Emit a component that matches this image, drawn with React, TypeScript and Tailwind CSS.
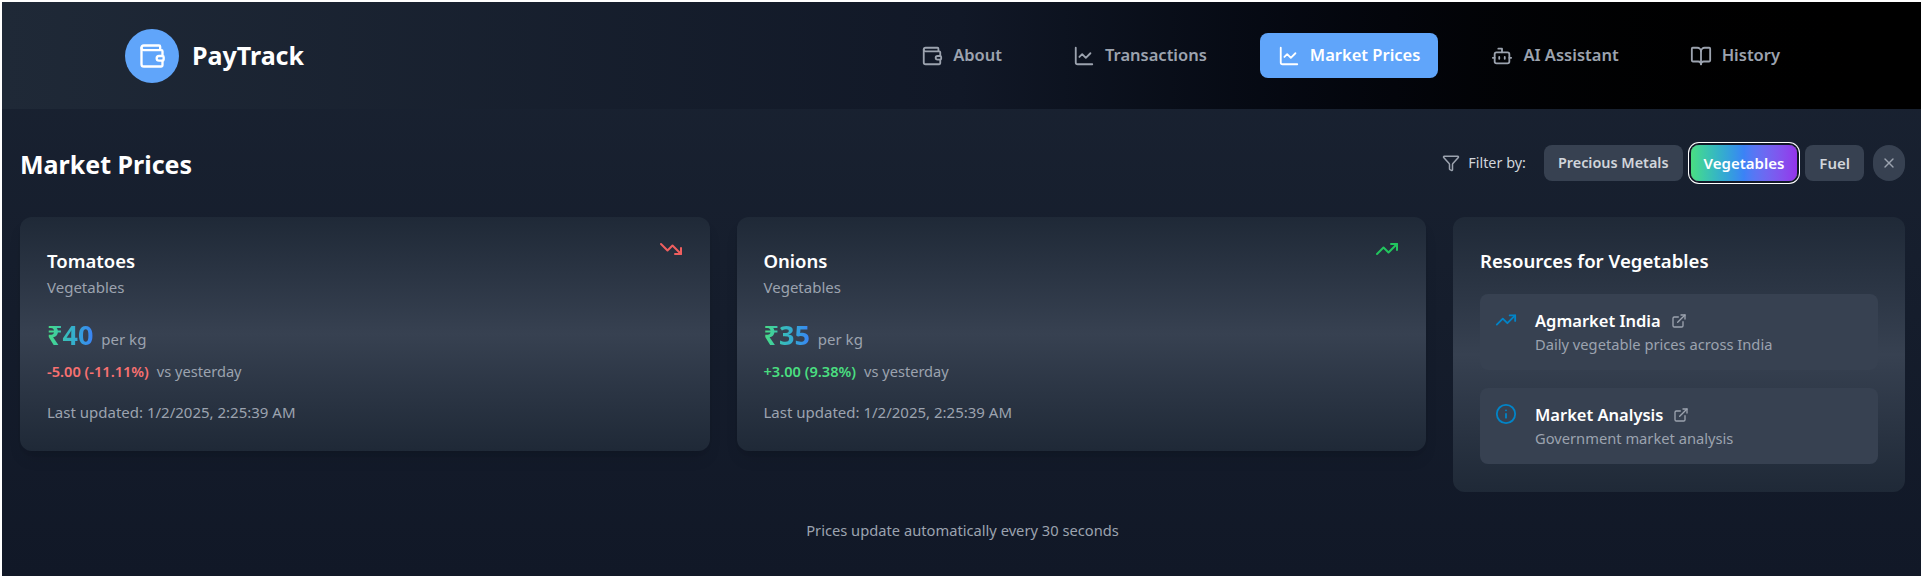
import {
  BookOpen,
  Bot,
  ExternalLink,
  Filter,
  Info,
  LineChart,
  TrendingDown,
  TrendingUp,
  Wallet,
  X,
} from "lucide-react";

const priceText =
  "bg-gradient-to-r from-[#4ade80] to-[#3b82f6] bg-clip-text text-[27px] leading-[36px] font-bold text-transparent";

function NavItem({ icon, label, active }: { icon: React.ReactNode; label: string; active?: boolean }) {
  return (
    <div
      className={
        active
          ? "flex h-[45px] items-center gap-[10px] rounded-lg bg-[#60a5fa] px-[18px] text-white"
          : "flex h-[45px] items-center gap-[10px] rounded-lg px-[18px] text-[#9ca3af]"
      }
    >
      {icon}
      <span className="text-[16.5px] font-semibold">{label}</span>
    </div>
  );
}

function PriceCard({
  name,
  price,
  change,
  up,
}: {
  name: string;
  price: string;
  change: string;
  up?: boolean;
}) {
  return (
    <div className="relative h-[234px] flex-1 rounded-xl bg-gradient-to-b from-[#1f2937] via-[#374151] to-[#1f2937] px-[27px] pt-[30px] shadow-lg">
      {up ? (
        <TrendingUp className="absolute top-[20px] right-[27px] h-6 w-6 text-[#22c55e]" />
      ) : (
        <TrendingDown className="absolute top-[20px] right-[27px] h-6 w-6 text-[#ef5f5f]" />
      )}
      <h3 className="text-[18.5px] leading-[28px] font-semibold text-white">{name}</h3>
      <p className="mt-[2px] text-[15px] leading-[20px] text-[#9ca3af]">Vegetables</p>
      <div className="mt-[20px] flex items-baseline gap-2">
        <span className={priceText}>{price}</span>
        <span className="text-[15px] text-[#9ca3af]">per kg</span>
      </div>
      <div className="mt-[8px] flex items-center gap-2 text-[14.6px] leading-[20px]">
        <span className={up ? "font-semibold text-[#4ade80]" : "font-semibold text-[#f87171]"}>{change}</span>
        <span className="text-[#9ca3af]">vs yesterday</span>
      </div>
      <p className="mt-[21px] text-[15px] leading-[20px] text-[#9ca3af]">Last updated: 1/2/2025, 2:25:39 AM</p>
    </div>
  );
}

function ResourceRow({ icon, title, text }: { icon: React.ReactNode; title: string; text: string }) {
  return (
    <div className="flex h-[76px] gap-[18px] rounded-lg bg-[#374151] px-[15px] py-[15px]">
      <div className="w-[22px] shrink-0 text-[#0284c7]">{icon}</div>
      <div>
        <div className="flex items-center gap-[10px]">
          <span className="text-[16.5px] leading-[24px] font-semibold text-white">{title}</span>
          <ExternalLink className="h-4 w-4 text-[#9ca3af]" />
        </div>
        <p className="mt-[1px] text-[14.7px] leading-[20px] text-[#9ca3af]">{text}</p>
      </div>
    </div>
  );
}

export default function App() {
  return (
    <div className="flex h-[578px] flex-col border-2 border-white bg-gradient-to-b from-[#1a2332] to-[#111827] font-['Noto_Sans',sans-serif]">
      <header className="flex h-[107px] shrink-0 items-center justify-between bg-gradient-to-r from-[#1f2937] via-[#111827] to-black pr-[123px] pl-[123px]">
        <div className="flex items-center gap-[13px]">
          <div className="flex h-[54px] w-[54px] items-center justify-center rounded-full bg-[#60a5fa] text-white">
            <Wallet className="h-7 w-7" />
          </div>
          <span className="text-[25px] font-bold text-white">PayTrack</span>
        </div>
        <nav className="flex items-center gap-[35px]">
          <NavItem icon={<Wallet className="h-[22px] w-[22px]" />} label="About" />
          <NavItem icon={<LineChart className="h-[22px] w-[22px]" />} label="Transactions" />
          <NavItem icon={<LineChart className="h-[22px] w-[22px]" />} label="Market Prices" active />
          <NavItem icon={<Bot className="h-[22px] w-[22px]" />} label="AI Assistant" />
          <NavItem icon={<BookOpen className="h-[22px] w-[22px]" />} label="History" />
        </nav>
      </header>
      <main className="flex-1 pt-[36px] pr-[16px] pl-[18px]">
        <div className="flex items-start justify-between">
          <h1 className="text-[25px] leading-[38px] font-bold text-white">Market Prices</h1>
          <div className="flex items-center gap-2">
            <Filter className="h-[18px] w-[18px] text-[#9ca3af]" />
            <span className="mr-[10px] text-[14.4px] text-[#d1d5db]">Filter by:</span>
            <span className="flex h-9 items-center rounded-lg bg-[#374151] px-[14px] text-[14.4px] font-semibold text-[#d1d5db]">
              Precious Metals
            </span>
            <span className="flex h-9 items-center rounded-lg bg-gradient-to-r from-[#4ade80] via-[#3b82f6] to-[#9333ea] px-[13px] text-[15px] font-semibold text-white ring-1 ring-white ring-offset-2 ring-offset-[#111827]">
              Vegetables
            </span>
            <span className="flex h-9 items-center rounded-lg bg-[#374151] px-[14px] text-[15px] font-semibold text-[#d1d5db]">
              Fuel
            </span>
            <span className="ml-[1px] flex h-9 w-[32px] items-center justify-center rounded-full bg-[#374151] text-[#9ca3af]">
              <X className="h-4 w-4" />
            </span>
          </div>
        </div>
        <div className="mt-[34px] flex gap-[27px]">
          <PriceCard name="Tomatoes" price="₹40" change="-5.00 (-11.11%)" />
          <PriceCard name="Onions" price="₹35" change="+3.00 (9.38%)" up />
          <aside className="h-[275px] w-[452px] shrink-0 rounded-xl bg-gradient-to-b from-[#1f2937] via-[#374151] to-[#1f2937] px-[27px] pt-[30px]">
            <h2 className="text-[18.6px] leading-[28px] font-semibold text-white">Resources for Vegetables</h2>
            <div className="mt-[19px] flex flex-col gap-[18px]">
              <ResourceRow
                icon={<TrendingUp className="h-[22px] w-[22px]" />}
                title="Agmarket India"
                text="Daily vegetable prices across India"
              />
              <ResourceRow
                icon={<Info className="h-[22px] w-[22px]" />}
                title="Market Analysis"
                text="Government market analysis"
              />
            </div>
          </aside>
        </div>
        <p className="mt-[27px] text-center text-[14.7px] text-[#9ca3af]">
          Prices update automatically every 30 seconds
        </p>
      </main>
    </div>
  );
}
